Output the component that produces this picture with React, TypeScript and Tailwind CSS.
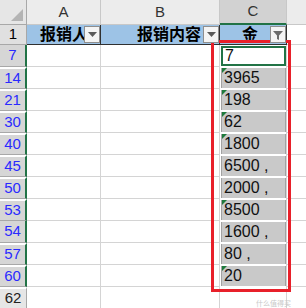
import { FunctionComponent } from "react";

interface Row {
    n: number;
    v: string;
    gap: boolean;
    tri?: boolean;
    active?: boolean;
    plain?: boolean;
}

const ROWS: Row[] = [
    { n: 7, v: "7", gap: false, active: true },
    { n: 14, v: "3965", gap: true, tri: true },
    { n: 21, v: "198", gap: true, tri: true },
    { n: 30, v: "62", gap: true, tri: true },
    { n: 40, v: "1800", gap: true, tri: true },
    { n: 45, v: "6500 ,", gap: true },
    { n: 50, v: "2000 ,", gap: true },
    { n: 53, v: "8500", gap: true, tri: true },
    { n: 54, v: "1600 ,", gap: false },
    { n: 57, v: "80 ,", gap: true },
    { n: 60, v: "20", gap: true, tri: true },
    { n: 62, v: "", gap: true, plain: true },
];

const FilterButton = ({ applied }: { applied?: boolean }) => {
    return (
        <div className="relative z-10 w-[16px] h-[17px] shrink-0 bg-[#f4f4f4] border border-[#8e8e8e] flex items-center justify-center">
            {applied ? (
                <svg width="12" height="12" viewBox="0 0 12 12">
                    <path d="M1 2 H11 L7 6.5 V11 L5 10 V6.5 Z" fill="#6b6b6b" />
                </svg>
            ) : (
                <svg width="9" height="5" viewBox="0 0 9 5">
                    <path d="M0 0 H9 L4.5 5 Z" fill="#5a5a5a" />
                </svg>
            )}
        </div>
    );
};

const DataRow: FunctionComponent<{ row: Row }> = ({ row }) => {
    const { n, v, gap, tri, active, plain } = row;
    return (
        <div className="flex h-[22px]">
            <div
                className={`w-[27px] shrink-0 flex items-center justify-center border-b border-[#a8a8a8] text-[15px] ${
                    plain
                        ? "bg-[#e6e6e6] text-[#222] border-r border-r-[#a8a8a8]"
                        : "bg-[#d6d6d6] text-[#2a2aff] border-r-2 border-r-[#217346]"
                } ${gap ? "border-t-2 border-t-white" : ""}`}
            >
                {n}
            </div>
            <div className="w-[74px] shrink-0 border-r border-b border-[#d4d4d4]" />
            <div className="w-[119px] shrink-0 border-r border-b border-[#d4d4d4]" />
            {plain ? (
                <div className="w-[67px] shrink-0 border-r border-b border-[#d4d4d4]" />
            ) : (
                <div className="w-[67px] shrink-0 border-r border-[#d4d4d4] pl-[1px] py-[1px] bg-white">
                    {active ? (
                        <div className="h-full border-2 border-[#217346] bg-white flex items-center pl-[2px] text-[16px] text-[#111]">
                            {v}
                        </div>
                    ) : (
                        <div className="relative h-full bg-[#c9c9c9] border-x border-[#a2a2a2] flex items-center pl-[2px] text-[16px] text-[#111]">
                            {tri && (
                                <div className="absolute left-0 top-0 w-0 h-0 border-t-[5px] border-r-[5px] border-t-[#1e7b3c] border-r-transparent" />
                            )}
                            {v}
                        </div>
                    )}
                </div>
            )}
            <div className="flex-1 border-b border-[#d4d4d4]" />
        </div>
    );
};

const App = () => {
    return (
        <div className="relative w-[306px] h-[308px] overflow-hidden bg-white font-['Liberation_Sans','Noto_Sans_CJK_SC',sans-serif]">
            {/* column letters */}
            <div className="flex h-[25px] text-[15px] text-[#333]">
                <div className="relative w-[27px] shrink-0 bg-[#e6e6e6] border-r border-b border-[#a8a8a8]">
                    <div className="absolute right-[3px] bottom-[3px] w-0 h-0 border-b-[12px] border-l-[12px] border-b-[#b4b4b4] border-l-transparent" />
                </div>
                <div className="w-[74px] shrink-0 bg-[#ececec] border-r border-b border-[#c8c8c8] flex items-center justify-center">A</div>
                <div className="w-[119px] shrink-0 bg-[#ececec] border-r border-b border-[#c8c8c8] flex items-center justify-center">B</div>
                <div className="w-[67px] shrink-0 bg-[#d2d2d2] border-r border-r-[#c8c8c8] border-b-2 border-b-[#217346] flex items-center justify-center">C</div>
                <div className="flex-1 bg-[#ececec] border-b border-[#c8c8c8]" />
            </div>

            {/* header row */}
            <div className="flex h-[20px] text-[16px] font-bold text-black">
                <div className="w-[27px] shrink-0 bg-[#e0e0e0] border-r border-b border-[#a8a8a8] flex items-center justify-center font-normal text-[15px]">
                    1
                </div>
                <div className="w-[74px] shrink-0 bg-[#9dc3e6] border-r border-b border-[#303030] flex items-center justify-end overflow-hidden">
                    <span className="mr-[-4px] whitespace-nowrap">报销人</span>
                    <FilterButton />
                </div>
                <div className="w-[119px] shrink-0 bg-[#9dc3e6] border-r border-b border-[#303030] flex items-center justify-end">
                    <span className="mr-[2px] whitespace-nowrap">报销内容</span>
                    <FilterButton />
                </div>
                <div className="w-[67px] shrink-0 bg-[#9dc3e6] border-r border-b border-[#303030] flex items-center justify-end">
                    <span className="mr-[12px] underline underline-offset-[2px]">金</span>
                    <FilterButton applied />
                </div>
                <div className="flex-1 border-b border-[#d4d4d4]" />
            </div>

            {ROWS.map((row) => (
                <DataRow key={row.n} row={row} />
            ))}

            {/* annotation */}
            <div className="absolute left-[211px] top-[40px] w-[80px] h-[252px] border-[3px] border-[#e8202a]" />
            <div className="absolute left-[256px] top-[298px] text-[7px] text-[#c8c8c8] font-['Noto_Sans_CJK_SC',sans-serif]">
                什么值得买
            </div>
        </div>
    );
};

export default App;
